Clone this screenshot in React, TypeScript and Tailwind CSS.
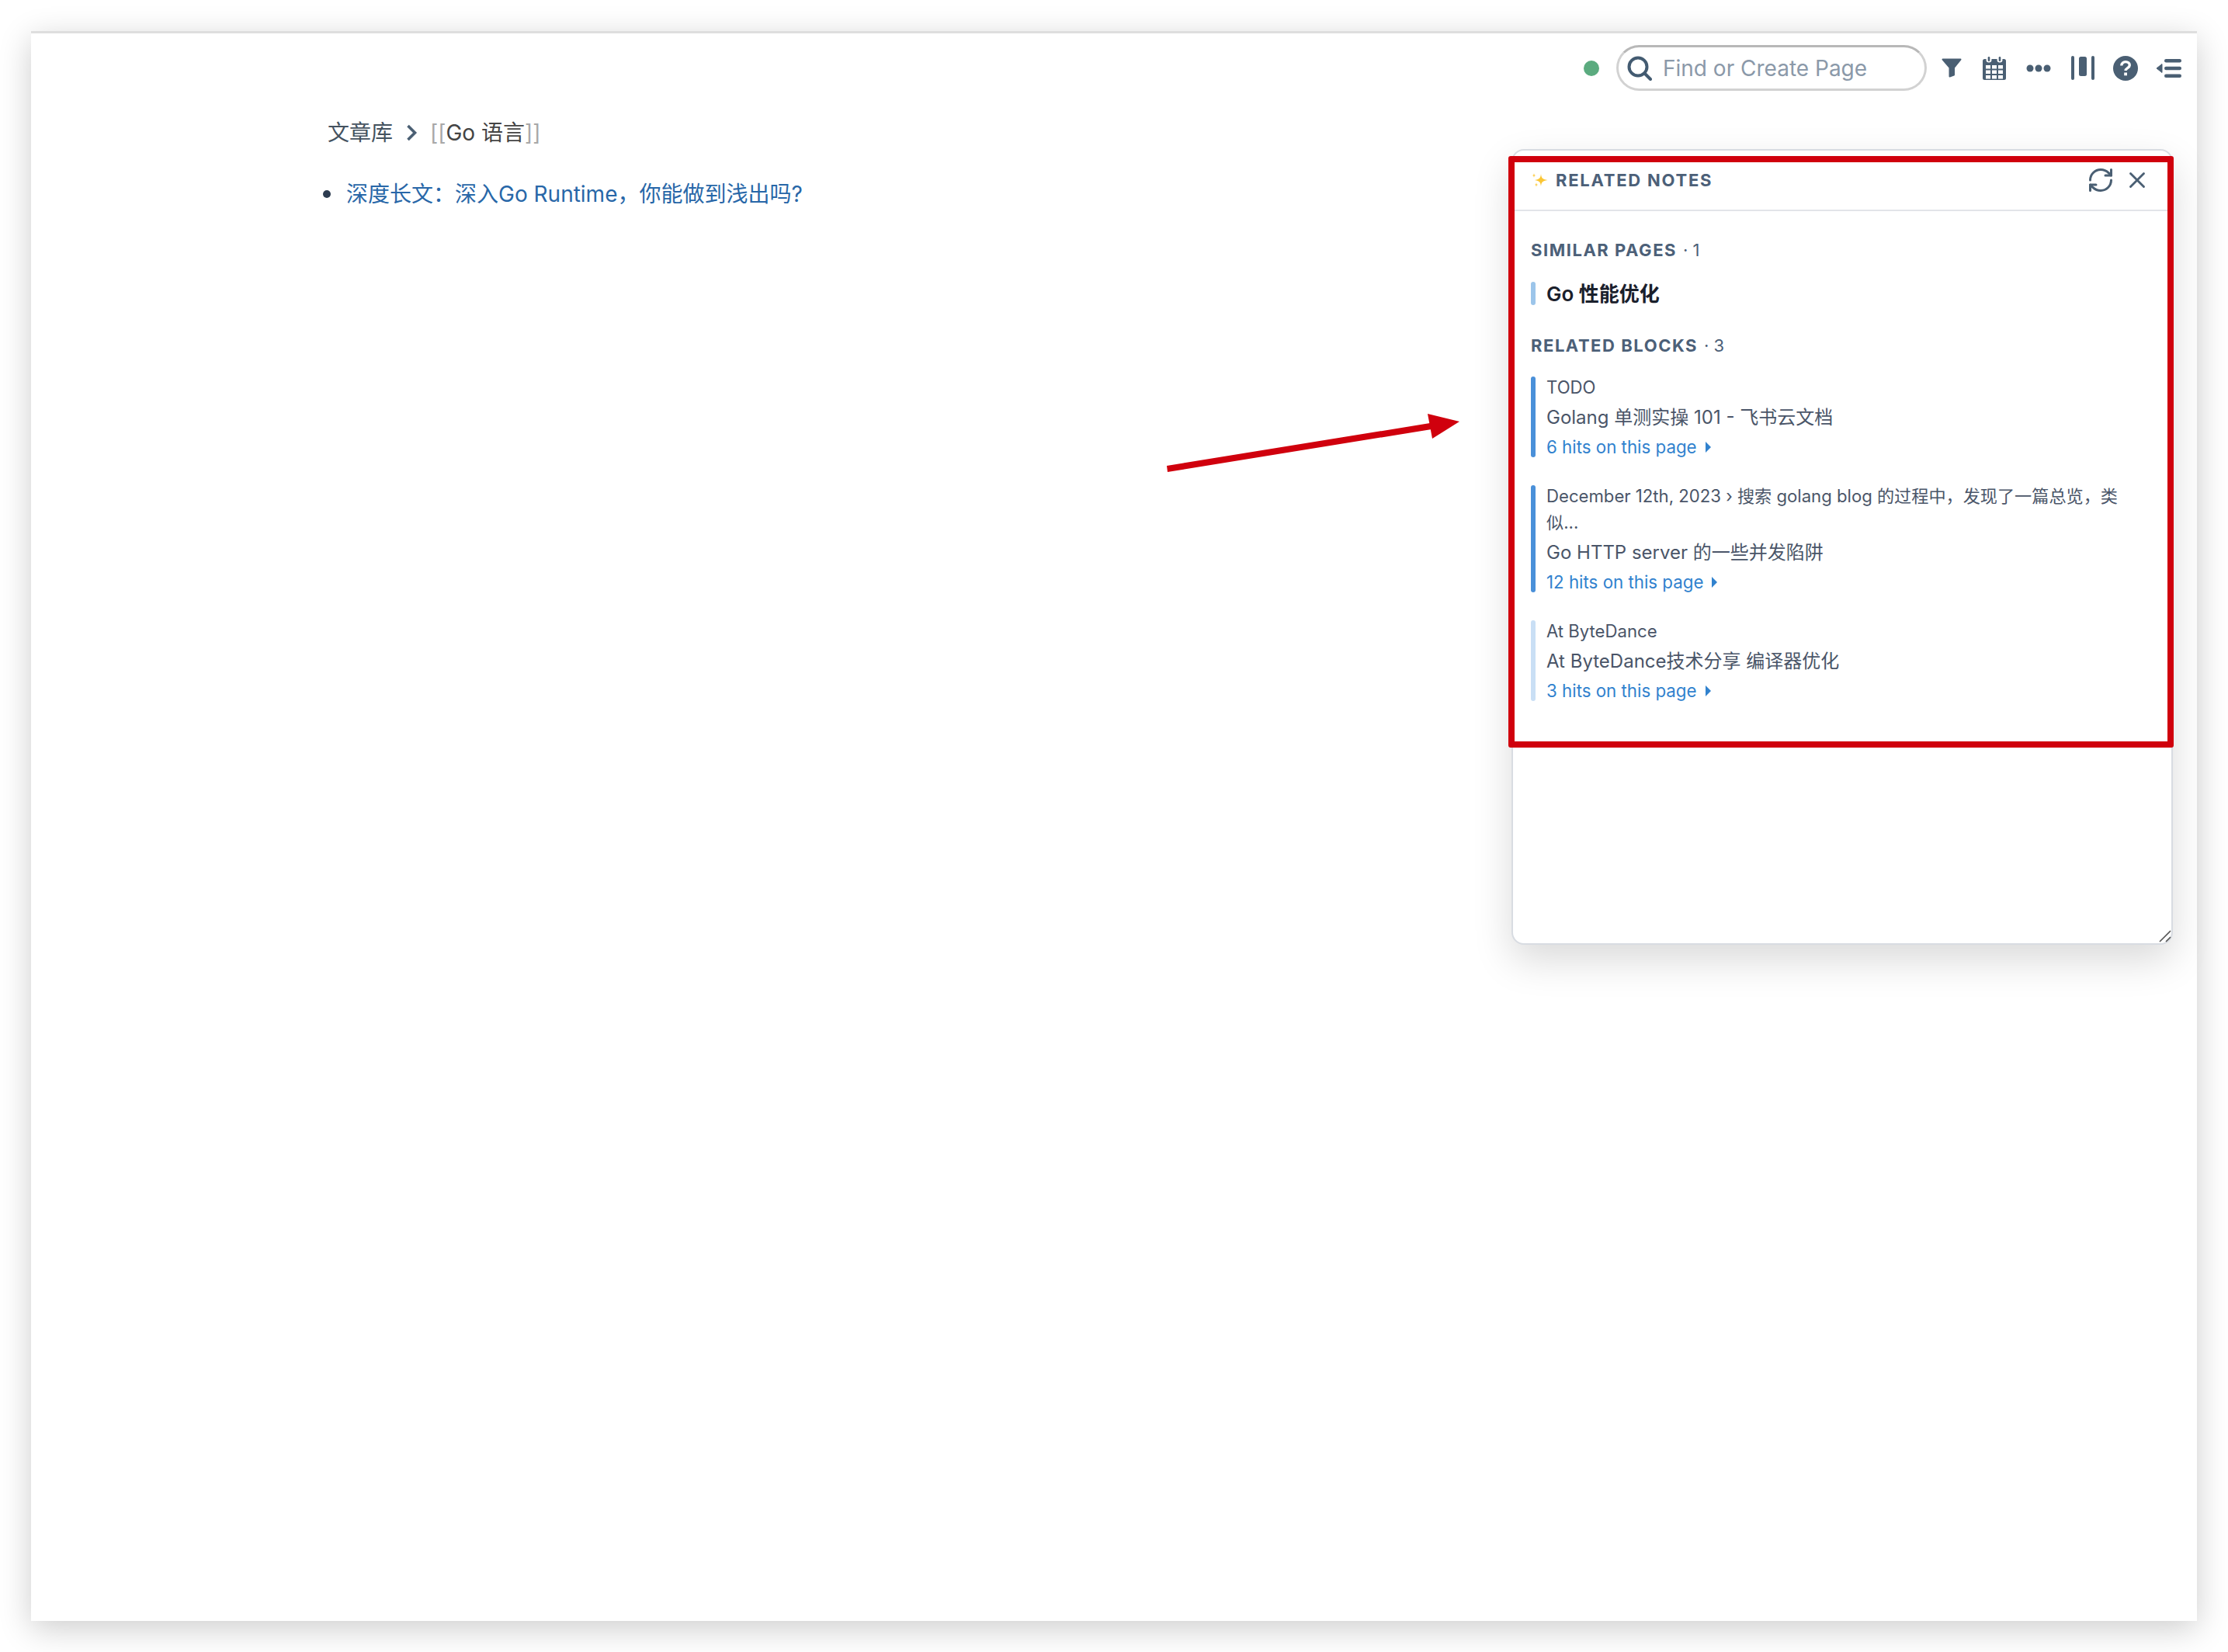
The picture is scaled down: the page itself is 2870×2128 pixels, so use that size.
import React from 'react';
import { RefreshCw, X } from 'lucide-react';

const Block: React.FC<{ meta: string; title: string; hits: string; bar: string }> = ({ meta, title, hits, bar }) => (
  <div className="flex gap-[14px]">
    <div className={`w-[6px] shrink-0 rounded-[3px] ${bar}`} />
    <div className="flex-1 min-w-0 pb-[1px]">
      <div className="-mt-[3px] text-[22.15px] leading-[34px] text-[#4a5568] pr-[36px]">{meta}</div>
      <div className="mt-[4px] text-[24px] leading-[36px] text-[#4a5568]">{title}</div>
      <div className="mt-[8px] flex items-center text-[22.3px] leading-[24px] text-[#3182ce]">
        {hits}
        <svg className="ml-[11px]" width="7" height="14" viewBox="0 0 7 14"><path d="M0 0l7 7-7 7z" fill="#3182ce" /></svg>
      </div>
    </div>
  </div>
);

const SectionTitle: React.FC<{ label: string; count: number; className?: string }> = ({ label, count, className }) => (
  <div className={`text-[22px] leading-[32px] text-[#4c6078] ${className}`}>
    <span className="font-bold tracking-[0.07em]">{label}</span>
    <span className="ml-[8px]">· {count}</span>
  </div>
);

const TopIcons = () => (
  <>
    <svg className="ml-[19px]" width="26" height="25" viewBox="0 0 26 25">
      <path d="M1.5 1.5h23l-8.5 10.5v9.5l-5.5 2v-11.5z" fill="#4a5f73" stroke="#4a5f73" strokeWidth="2" strokeLinejoin="round" />
    </svg>
    <svg className="ml-[27px]" width="30" height="30" viewBox="0 0 30 30">
      <rect x="0" y="3" width="30" height="27" rx="2.5" fill="#4a5f73" />
      <circle cx="8" cy="4" r="3.5" fill="#fff" />
      <circle cx="22" cy="4" r="3.5" fill="#fff" />
      <rect x="6.7" y="0" width="2.6" height="6" rx="1.3" fill="#4a5f73" />
      <rect x="20.7" y="0" width="2.6" height="6" rx="1.3" fill="#4a5f73" />
      {[4, 12, 20].map((x) => [11, 17.5, 24].map((y) => <rect key={`${x}-${y}`} x={x} y={y} width="6" height="4.5" fill="#fff" />))}
    </svg>
    <svg className="ml-[26px]" width="32" height="10" viewBox="0 0 32 10">
      <circle cx="5" cy="5" r="4.5" fill="#4a5f73" />
      <circle cx="16" cy="5" r="4.5" fill="#4a5f73" />
      <circle cx="27" cy="5" r="4.5" fill="#4a5f73" />
    </svg>
    <svg className="ml-[26px]" width="30" height="31" viewBox="0 0 30 31">
      <rect x="0" y="0" width="4" height="31" rx="2" fill="#4a5f73" />
      <rect x="10" y="1" width="10" height="25" rx="2.5" fill="#4a5f73" />
      <rect x="26" y="0" width="4" height="31" rx="2" fill="#4a5f73" />
    </svg>
    <svg className="ml-[24px]" width="32" height="32" viewBox="0 0 32 32">
      <circle cx="16" cy="16" r="16" fill="#4a5f73" />
      <path d="M10.8 12.500c0-3 2.300-4.900 5.300-4.900s5.200 1.800 5.200 4.400c0 3.600-5.200 3.600-5.200 7" fill="none" stroke="#fff" strokeWidth="3.4" />
      <rect x="14.2" y="21.5" width="3.8" height="3.8" fill="#fff" />
    </svg>
    <svg className="ml-[24px]" width="32" height="24" viewBox="0 0 32 24">
      <path d="M0 12l7-5.500v11z" fill="#4a5f73" stroke="#4a5f73" strokeWidth="1" strokeLinejoin="round" />
      <rect x="10" y="0" width="22" height="4.4" rx="2.2" fill="#4a5f73" />
      <rect x="10" y="9.8" width="22" height="4.4" rx="2.2" fill="#4a5f73" />
      <rect x="10" y="19.6" width="22" height="4.4" rx="2.2" fill="#4a5f73" />
    </svg>
  </>
);

export default function App() {
  return (
    <div className="h-[2128px] overflow-hidden bg-white pl-[40px] pt-[40px] font-[Inter,'Noto_Sans_CJK_SC',sans-serif]">
      <div className="relative w-[2790px] h-[2048px] border-t-[3px] border-[#dedede] bg-white shadow-[0_10px_40px_rgba(0,0,0,0.2)]">
        <header className="flex items-center justify-end pt-[15px] pr-[20px]">
          <div className="w-[20px] h-[20px] rounded-full bg-[#5bab7f]" />
          <div className="ml-[22px] flex h-[59px] w-[400px] items-center rounded-full border-[3px] border-[#d2d2d2] border-t-[#b8b8b8] pl-[11px]">
            <svg width="32" height="32" viewBox="0 0 32 32" fill="none" stroke="#435b71" strokeWidth="4" strokeLinecap="round">
              <circle cx="14" cy="14" r="11.5" />
              <path d="M23 23l7 7" />
            </svg>
            <span className="ml-[14px] text-[28px] text-[#8b99a9]">Find or Create Page</span>
          </div>
          <TopIcons />
        </header>

        <main className="pl-[376px]">
          <div className="mt-[34px] ml-[6px] flex h-[40px] items-center text-[28px] text-[#44525f]">
            文章库
            <svg className="ml-[17px] mr-[16px]" width="15" height="22" viewBox="0 0 15 22" fill="none" stroke="#4a5f73" strokeWidth="3.6" strokeLinejoin="miter">
              <path d="M2.500 2l9 9-9 9" />
            </svg>
            <span className="text-[#a8a8a8]">[[</span>
            <span className="text-[#444]">Go 语言</span>
            <span className="text-[#a8a8a8]">]]</span>
          </div>
          <div className="mt-[39px] flex h-[40px] items-center">
            <div className="w-[10px] h-[10px] rounded-full bg-[#2d3c50]" />
            <a className="ml-[20px] text-[28px] text-[#2867a8]">深度长文：深入Go Runtime，你能做到浅出吗?</a>
          </div>
        </main>

        <aside className="absolute left-[1907px] top-[149px] w-[852px] h-[1025px] rounded-[16px] border-[2px] border-[#d8dce2] bg-white shadow-[0_20px_50px_rgba(0,0,0,0.15)]">
          <div className="flex h-[78px] items-center border-b-[2px] border-[#e2e4e9] pl-[24px] pr-[27px]">
            <svg width="22" height="20" viewBox="0 0 22 20">
              <path d="M12 2c.6 5 1.500 7 8.500 8-7 1-7.900 3-8.500 8-.6-5-1.500-7-8-8 6.500-1 7.400-3 8-8z" fill="#fbc634" />
              <path d="M3 1c.3 2 .7 2.600 2.500 3-1.800.4-2.200 1-2.500 3-.3-2-.7-2.600-2.500-3 1.800-.4 2.200-1 2.500-3zM6 13c.3 2 .6 2.500 2 3-1.400.500-1.700 1-2 3-.3-2-.6-2.500-2-3 1.400-.500 1.700-1 2-3z" fill="#fcd25c" />
            </svg>
            <span className="ml-[9px] text-[22px] font-bold tracking-[0.08em] text-[#4c6078]">RELATED NOTES</span>
            <RefreshCw className="ml-auto" size={36} color="#4a5f73" strokeWidth={2} />
            <X className="ml-[12px]" size={34} color="#4a5f73" strokeWidth={2} />
          </div>
          <div className="pl-[23px] pr-[24px] pt-[34px]">
            <SectionTitle label="SIMILAR PAGES" count={1} />
            <div className="mt-[25px] flex h-[30px] items-center gap-[14px]">
              <div className="w-[6px] h-full rounded-[3px] bg-[#9cc5ea]" />
              <span className="text-[26px] font-semibold text-[#1a202c]">Go 性能优化</span>
            </div>
            <SectionTitle label="RELATED BLOCKS" count={3} className="mt-[36px]" />
            <div className="mt-[24px] flex flex-col gap-[36px]">
              <Block bar="bg-[#4a90d9]" meta="TODO" title="Golang 单测实操 101 - 飞书云文档" hits="6 hits on this page" />
              <Block bar="bg-[#4a90d9]" meta="December 12th, 2023 › 搜索 golang blog 的过程中，发现了一篇总览，类似..." title="Go HTTP server 的一些并发陷阱" hits="12 hits on this page" />
              <Block bar="bg-[#c9dff5]" meta="At ByteDance" title="At ByteDance技术分享 编译器优化" hits="3 hits on this page" />
            </div>
          </div>
          <svg className="absolute right-[0px] bottom-[0px]" width="18" height="18" viewBox="0 0 18 18" stroke="#555" strokeWidth="1.600">
            <path d="M3 16L17 2M11 16l6-6" />
          </svg>
        </aside>

        {/* annotation drawn over the screenshot */}
        <div className="absolute left-[1903px] top-[158px] w-[857px] h-[762px] border-[8px] border-[#d0000d] rounded-[3px]" />
        <svg className="absolute left-[1460px] top-[487px]" width="385" height="80" viewBox="1500 530 385 80">
          <polygon points="1503,600 1842,545 1844,553 1504,608" fill="#d0000d" />
          <polygon points="1839,533 1880,543 1845,565" fill="#d0000d" />
        </svg>
      </div>
    </div>
  );
}
